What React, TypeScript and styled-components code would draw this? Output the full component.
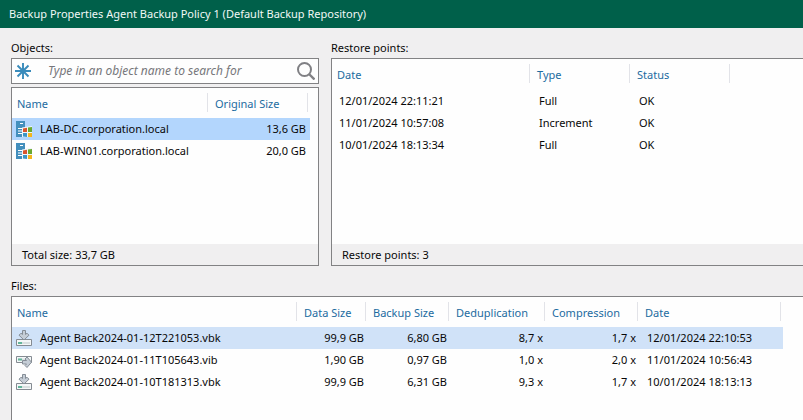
import React from "react";
import styled, { createGlobalStyle, css } from "styled-components";

const GlobalStyle = createGlobalStyle`
  *, *::before, *::after { box-sizing: border-box; }
  body {
    margin: 0;
    background: #f0eff0;
    color: #080808;
    font: 11px/16px "Noto Sans", "Open Sans", sans-serif;
  }
`;

const Window = styled.div`
  display: flex;
  flex-direction: column;
  min-height: 100vh;
  overflow: hidden;
`;

const TitleBar = styled.header`
  display: flex;
  align-items: center;
  height: 28px;
  padding: 0 9px;
  background: #00604a;
  color: #f2f8f6;
`;

const Title = styled.h1`
  margin: 0;
  font: inherit;
  white-space: nowrap;
`;

const Content = styled.main`
  flex: 1;
  display: flex;
  flex-direction: column;
  gap: 12px;
  padding: 12px 0 0 11px;
`;

const TopArea = styled.div`
  display: grid;
  grid-template-columns: 308px minmax(0, 1fr);
  gap: 12px;
  height: 226px;
`;

const Section = styled.section<{ $grow?: boolean }>`
  display: flex;
  flex-direction: column;
  min-width: 0;
  ${(p) => p.$grow && css`flex: 1;`}
`;

const Label = styled.h2`
  margin: 0 0 2px;
  font: inherit;
`;

const SearchBox = styled.form`
  display: flex;
  align-items: center;
  height: 26px;
  margin-bottom: 3px;
  padding: 0 3px;
  border: 1px solid #828284;
  background: #fefefe;
`;

const SearchInput = styled.input`
  flex: 1;
  min-width: 0;
  padding: 0 0 0 17px;
  border: 0;
  outline: 0;
  background: transparent;
  color: #222;
  font: italic 12px/16px "Noto Sans", "Open Sans", sans-serif;
  &::placeholder { color: #77777b; opacity: 1; }
`;

const IconButton = styled.button`
  display: flex;
  padding: 0;
  border: 0;
  background: transparent;
`;

const Panel = styled.div<{ $open?: "right" | "corner" }>`
  flex: 1;
  display: flex;
  flex-direction: column;
  justify-content: space-between;
  overflow: hidden;
  border: 1px solid #828284;
  background: #fefefe;
  ${(p) => p.$open && css`border-right: 0;`}
  ${(p) => p.$open === "corner" && css`border-bottom: 0;`}
`;

const PanelFooter = styled.footer`
  display: flex;
  align-items: center;
  height: 21px;
  padding: 0 10px;
  background: #f0eff0;
`;

const Table = styled.table`
  width: 0;
  table-layout: fixed;
  border-collapse: collapse;
  white-space: nowrap;
`;

const Column = styled.col<{ $width: number }>`
  width: ${(p) => p.$width}px;
`;

const HeadCell = styled.th<{ $height: number }>`
  height: ${(p) => p.$height}px;
  padding: 1px 0 0 7px;
  background: linear-gradient(#e2e3e8, #e2e3e8) right 5px / 1px 19px no-repeat;
  color: #1c6ba0;
  font-weight: 400;
  text-align: left;
  &:first-child { padding-left: 5px; }
  &:last-child { background-position: right 2px top 5px; }
`;

const Row = styled.tr<{ $tone?: string }>`
  height: 22px;
  background: ${(p) => p.$tone ?? "transparent"};
`;

const Cell = styled.td<{ $align?: "right" | "left"; $end?: number }>`
  padding: 0 ${(p) => p.$end ?? 2}px 0 9px;
  text-align: ${(p) => p.$align ?? "left"};
  &:first-child { padding-left: 7px; }
`;

const NameCell = styled.td`
  padding: 0 0 0 4px;
`;

const NameContent = styled.div`
  display: flex;
  align-items: center;
  gap: 8px;
`;

const Icon = styled.svg`
  display: block;
  flex: none;
`;

const AsteriskIcon = () => (
  <Icon width="16" height="16" viewBox="0 0 16 16" aria-hidden="true">
    <path d="M8 0v16M0 8h16M2.5 2.5l11 11M13.500 2.500l-11 11" stroke="#398bbb" strokeWidth="1.9" />
    <circle cx="8" cy="8" r="2.500" fill="#398bbb" />
  </Icon>
);

const MagnifierIcon = () => (
  <Icon width="18" height="18" viewBox="0 0 18 18" aria-hidden="true">
    <circle cx="7.500" cy="7.500" r="6.500" fill="none" stroke="#808084" strokeWidth="2" />
    <path d="M12 12l5.500 5.500" stroke="#808084" strokeWidth="2.400" />
  </Icon>
);

const ServerIcon = () => (
  <Icon width="16" height="16" viewBox="0 0 16 16" aria-hidden="true">
    <path d="M0 0h9v16H0z" fill="#438fbd" />
    <path d="M4 2h3v1H4zM2 7h5v1H2zM2 9.500h4v1H2zM2 12h4v1H2z" fill="#fff" />
    <path d="M6 6.500l10-1.500v11H6z" fill="#eef5f8" />
    <path d="M7 7.400l4-.6V11H7z" fill="#d9542c" />
    <path d="M12 6.600l4-.6v5h-4z" fill="#69a82e" />
    <path d="M7 12h4v4l-4-.6z" fill="#3a94c6" />
    <path d="M12 12h4v4h-4z" fill="#f4b51d" />
  </Icon>
);

const FullBackupIcon = () => (
  <Icon width="16" height="16" viewBox="0 0 16 16" aria-hidden="true">
    <path d="M.5 9.500h15v6H.5z" fill="#f4f7f8" stroke="#858b92" />
    <path d="M2 12h12v2H2z" fill="#d8dfe0" />
    <path d="M2 12h4v2H2z" fill="#62b59b" />
    <path d="M6.500.5h3v4l1.500-1.300 2 2L8 10 3 5.200l2-2 1.500 1.300z" fill="#c5cdd6" stroke="#858d96" />
  </Icon>
);

const IncrementIcon = () => (
  <Icon width="16" height="16" viewBox="0 0 16 16" aria-hidden="true">
    <path d="M.5 4.500h15v6H.5z" fill="#f4f7f8" stroke="#858b92" />
    <path d="M2 6.500h7v2H2z" fill="#d8dfe0" />
    <path d="M2 6.500h4v2H2z" fill="#62b59b" />
    <path d="M6.500 8.500h4L9 7l2-2 4.500 5.200-4.500 5.300-2-2 1.500-1.500h-4z" fill="#c5cdd6" stroke="#858d96" />
  </Icon>
);

const objects = [
  { name: "LAB-DC.corporation.local", size: "13,6 GB", selected: true },
  { name: "LAB-WIN01.corporation.local", size: "20,0 GB", selected: false },
];

const restorePoints = [
  ["12/01/2024 22:11:21", "Full", "OK"],
  ["11/01/2024 10:57:08", "Increment", "OK"],
  ["10/01/2024 18:13:34", "Full", "OK"],
];

const files = [
  { name: "Agent Back2024-01-12T221053.vbk", sizes: ["99,9 GB", "6,80 GB", "8,7 x", "1,7 x"], date: "12/01/2024 22:10:53", full: true, selected: true },
  { name: "Agent Back2024-01-11T105643.vib", sizes: ["1,90 GB", "0,97 GB", "1,0 x", "2,0 x"], date: "11/01/2024 10:56:43", full: false, selected: false },
  { name: "Agent Back2024-01-10T181313.vbk", sizes: ["99,9 GB", "6,31 GB", "9,3 x", "1,7 x"], date: "10/01/2024 18:13:13", full: true, selected: false },
];

interface TableHeadProps {
  widths: number[];
  titles: string[];
  height?: number;
}

function TableHead({ widths, titles, height = 30 }: TableHeadProps) {
  return (
    <>
      <colgroup>
        {widths.map((width, i) => <Column key={i} $width={width} />)}
      </colgroup>
      <thead>
        <tr>
          {titles.map((title) => <HeadCell key={title} scope="col" $height={height}>{title}</HeadCell>)}
        </tr>
      </thead>
    </>
  );
}

export default function App() {
  return (
    <Window>
      <GlobalStyle />
      <TitleBar>
        <Title>Backup Properties Agent Backup Policy 1 (Default Backup Repository)</Title>
      </TitleBar>
      <Content>
        <TopArea>
          <Section aria-labelledby="objects-label">
            <Label id="objects-label">Objects:</Label>
            <SearchBox role="search" onSubmit={(e) => e.preventDefault()}>
              <IconButton type="button" aria-label="Object filter"><AsteriskIcon /></IconButton>
              <SearchInput aria-label="Search objects" placeholder="Type in an object name to search for" />
              <IconButton type="submit" aria-label="Search"><MagnifierIcon /></IconButton>
            </SearchBox>
            <Panel>
              <Table aria-labelledby="objects-label">
                <TableHead widths={[196, 102]} titles={["Name", "Original Size"]} />
                <tbody>
                  {objects.map((o) => (
                    <Row key={o.name} $tone={o.selected ? "#b3d6fd" : undefined}>
                      <NameCell><NameContent><ServerIcon />{o.name}</NameContent></NameCell>
                      <Cell $align="right" $end={4}>{o.size}</Cell>
                    </Row>
                  ))}
                </tbody>
              </Table>
              <PanelFooter>Total size: 33,7 GB</PanelFooter>
            </Panel>
          </Section>
          <Section aria-labelledby="points-label">
            <Label id="points-label">Restore points:</Label>
            <Panel $open="right">
              <Table aria-labelledby="points-label">
                <TableHead widths={[198, 100, 102]} titles={["Date", "Type", "Status"]} height={31} />
                <tbody>
                  {restorePoints.map((point) => (
                    <Row key={point[0]}>
                      {point.map((value) => <Cell key={value}>{value}</Cell>)}
                    </Row>
                  ))}
                </tbody>
              </Table>
              <PanelFooter>Restore points: 3</PanelFooter>
            </Panel>
          </Section>
        </TopArea>
        <Section $grow aria-labelledby="files-label">
          <Label id="files-label">Files:</Label>
          <Panel $open="corner">
            <Table aria-labelledby="files-label">
              <TableHead
                widths={[285, 69, 83, 96, 93, 145]}
                titles={["Name", "Data Size", "Backup Size", "Deduplication", "Compression", "Date"]}
              />
              <tbody>
                {files.map((file) => (
                  <Row key={file.name} $tone={file.selected ? "#d0e2f8" : undefined}>
                    <NameCell>
                      <NameContent>
                        {file.full ? <FullBackupIcon /> : <IncrementIcon />}
                        {file.name}
                      </NameContent>
                    </NameCell>
                    {file.sizes.map((size, i) => <Cell key={i} $align="right">{size}</Cell>)}
                    <Cell>{file.date}</Cell>
                  </Row>
                ))}
              </tbody>
            </Table>
          </Panel>
        </Section>
      </Content>
    </Window>
  );
}
